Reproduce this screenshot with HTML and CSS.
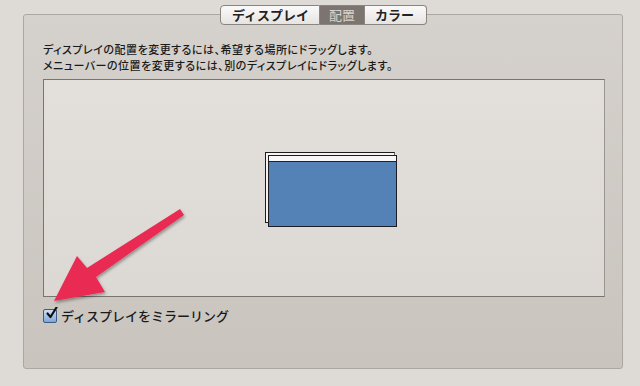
FILE: index.html
```html
<!DOCTYPE html>
<html lang="ja">
<head>
    <meta charset="UTF-8">
    <title>ディスプレイ 配置</title>
    <link rel="stylesheet" href="styles.css">
</head>
<body>
    <div class="panel">
        <div class="tabs">
            <div class="tab">ディスプレイ</div>
            <div class="tab active">配置</div>
            <div class="tab">カラー</div>
        </div>
        <p class="hint">ディスプレイの配置を変更するには、希望する場所にドラッグします。<br>メニューバーの位置を変更するには、別のディスプレイにドラッグします。</p>
        <div class="arrange">
            <div class="screen back"></div>
            <div class="screen front"><div class="menubar"></div></div>
        </div>
        <label class="mirror">
            <span class="check">
                <svg width="13" height="13" viewBox="0 0 13 13">
                    <path d="M2.5 6.5 L5.5 10 L11.5 0.5" fill="none" stroke="#111" stroke-width="2.2" stroke-linecap="round" stroke-linejoin="round"/>
                </svg>
            </span>
            ディスプレイをミラーリング
        </label>
    </div>
    <svg class="arrow" width="640" height="386" viewBox="0 0 640 386">
        <defs>
            <filter id="sh" x="-20%" y="-20%" width="140%" height="140%">
                <feDropShadow dx="1" dy="2" stdDeviation="1.5" flood-color="#000" flood-opacity="0.35"/>
            </filter>
        </defs>
        <polygon points="54,301 77,256 87,268 180,209 184,215 96,277 105,292" fill="#e92a52" filter="url(#sh)"/>
    </svg>
</body>
</html>
```

FILE: styles.css
```css
body {
    margin: 0;
    width: 640px;
    height: 386px;
    background: #dedad5;
    font-family: "Noto Sans CJK JP", "DejaVu Sans", sans-serif;
    overflow: hidden;
}
.panel {
    margin: 14px 0 0 23px;
    width: 579px;
    height: 353px;
    padding: 0 0 0 19px;
    border: 1px solid #aca7a1;
    border-radius: 3px;
    background: linear-gradient(#d5d1cc, #c9c4be);
}
.tabs {
    display: flex;
    margin: -10px 0 0 177px;
    width: max-content;
}
.tab {
    height: 18px;
    line-height: 18px;
    padding: 0 9px;
    font-size: 13px;
    font-weight: bold;
    color: #222;
    background: linear-gradient(#fbfafa, #e6e4e1);
    border: 1px solid #8a8580;
    border-left: none;
}
.tab:first-child {
    border-left: 1px solid #8a8580;
    border-radius: 4px 0 0 4px;
    padding: 0 10px 0 11px;
}
.tab:last-child {
    border-radius: 0 4px 4px 0;
    padding: 0 12px 0 10px;
}
.tab.active {
    background: #7c746f;
    color: #d9d4cf;
    font-weight: normal;
}
.hint {
    margin: 16px 0 0;
    font-size: 11px;
    font-weight: 500;
    line-height: 16px;
    color: #1a1a1a;
    font-feature-settings: "palt";
    letter-spacing: 0.5px;
}
.arrange {
    position: relative;
    margin-top: 6px;
    width: 560px;
    height: 216px;
    background: linear-gradient(#e3e0dc, #dcd9d4);
    border: 1px solid #7a746e;
    border-right-color: #9a958f;
}
.screen {
    position: absolute;
    border: 1px solid #1c1c22;
}
.back {
    left: 221px;
    top: 72px;
    width: 128px;
    height: 69px;
    background: #f6f4f2;
    border-right-color: #6a6560;
}
.front {
    left: 224px;
    top: 75px;
    width: 127px;
    height: 70px;
    background: #5582b6;
}
.menubar {
    height: 5px;
    background: #f8f8f8;
    border-bottom: 1px solid #222;
}
.mirror {
    display: flex;
    align-items: center;
    gap: 4px;
    margin-top: 9px;
    font-size: 13px;
    font-weight: 500;
    color: #1a1a1a;
}
.check {
    width: 12px;
    height: 12px;
    border: 1px solid #3b5a86;
    border-radius: 2px;
    background: linear-gradient(#cfe0f4, #7fa6d6);
    position: relative;
}
.check svg {
    position: absolute;
    left: 1px;
    top: -3px;
}
.arrow {
    position: absolute;
    left: 0;
    top: 0;
    pointer-events: none;
}
```
